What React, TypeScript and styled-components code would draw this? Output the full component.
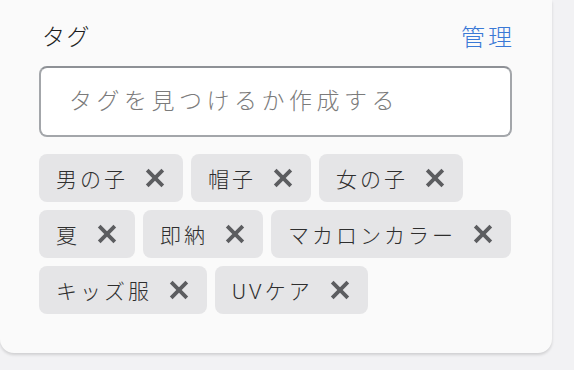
import React from "react";
import styled, { createGlobalStyle } from "styled-components";

const GlobalStyle = createGlobalStyle`
  html, body {
    margin: 0;
    padding: 0;
    background: #f2f2f4;
  }
  body {
    font-family: Roboto, "Noto Sans CJK JP", sans-serif;
    -webkit-font-smoothing: antialiased;
  }
`;

const Page = styled.div`
  width: 574px;
  height: 370px;
  overflow: hidden;
  background: #f2f2f4;
`;

const Card = styled.section`
  box-sizing: border-box;
  width: 552px;
  padding: 17px 40px 39px 39px;
  background: #fafafa;
  border-radius: 0 0 14px 14px;
  box-shadow: 0 2px 3px rgba(0, 0, 0, 0.14);
  display: flex;
  flex-direction: column;
`;

const Header = styled.div`
  display: flex;
  justify-content: space-between;
  align-items: center;
  height: 36px;
  padding-left: 3px;
`;

const Label = styled.span`
  font-family: Roboto, "Noto Sans CJK JP", sans-serif;
  font-size: 23px;
  font-weight: 300;
  letter-spacing: 1.5px;
  color: #1e1e1e;
`;

const ManageLink = styled.a`
  font-family: Roboto, "Noto Sans CJK JP", sans-serif;
  font-size: 24px;
  font-weight: 300;
  letter-spacing: 3px;
  margin-right: -3px;
  color: #3a79d6;
  text-decoration: none;
  cursor: pointer;
`;

const SearchInput = styled.input`
  box-sizing: border-box;
  margin-top: 13px;
  width: 100%;
  height: 71px;
  padding: 0 20px 0 28px;
  border: 2px solid #a3a6aa;
  border-top-color: #8e9196;
  border-radius: 8px;
  background: #ffffff;
  font-family: Roboto, "Noto Sans CJK JP", sans-serif;
  font-size: 23px;
  font-weight: 300;
  letter-spacing: 4.5px;
  color: #222;
  outline: none;
  &::placeholder {
    color: #7b7b7b;
  }
`;

const TagList = styled.div`
  margin-top: 17px;
  display: flex;
  flex-wrap: wrap;
  gap: 8px;
`;

const Tag = styled.div`
  box-sizing: border-box;
  height: 48px;
  display: flex;
  align-items: center;
  padding: 0 18px 0 17px;
  background: #e5e5e7;
  border-radius: 8px;
`;

const TagText = styled.span`
  font-family: Roboto, "Noto Sans CJK JP", sans-serif;
  font-size: 21px;
  font-weight: 300;
  letter-spacing: 3px;
  color: #2e2e2e;
  white-space: nowrap;
`;

const RemoveButton = styled.button`
  margin-left: 17px;
  padding: 0;
  width: 20px;
  height: 20px;
  border: none;
  background: transparent;
  display: flex;
  align-items: center;
  justify-content: center;
  cursor: pointer;
`;

const CloseIcon = () => (
  <svg width="20" height="20" viewBox="0 0 20 20">
    <path
      d="M2.2 2.2 L17.8 17.8 M17.8 2.2 L2.2 17.8"
      stroke="#5c5d60"
      strokeWidth="3.8"
      strokeLinecap="butt"
      fill="none"
    />
  </svg>
);

const tags = [
  "男の子",
  "帽子",
  "女の子",
  "夏",
  "即納",
  "マカロンカラー",
  "キッズ服",
  "UVケア",
];

export default function App() {
  return (
    <>
      <GlobalStyle />
      <Page>
        <Card>
          <Header>
            <Label>タグ</Label>
            <ManageLink>管理</ManageLink>
          </Header>
          <SearchInput placeholder="タグを見つけるか作成する" />
          <TagList>
            {tags.map((t) => (
              <Tag key={t}>
                <TagText>{t}</TagText>
                <RemoveButton aria-label={`${t}を削除`}>
                  <CloseIcon />
                </RemoveButton>
              </Tag>
            ))}
          </TagList>
        </Card>
      </Page>
    </>
  );
}
